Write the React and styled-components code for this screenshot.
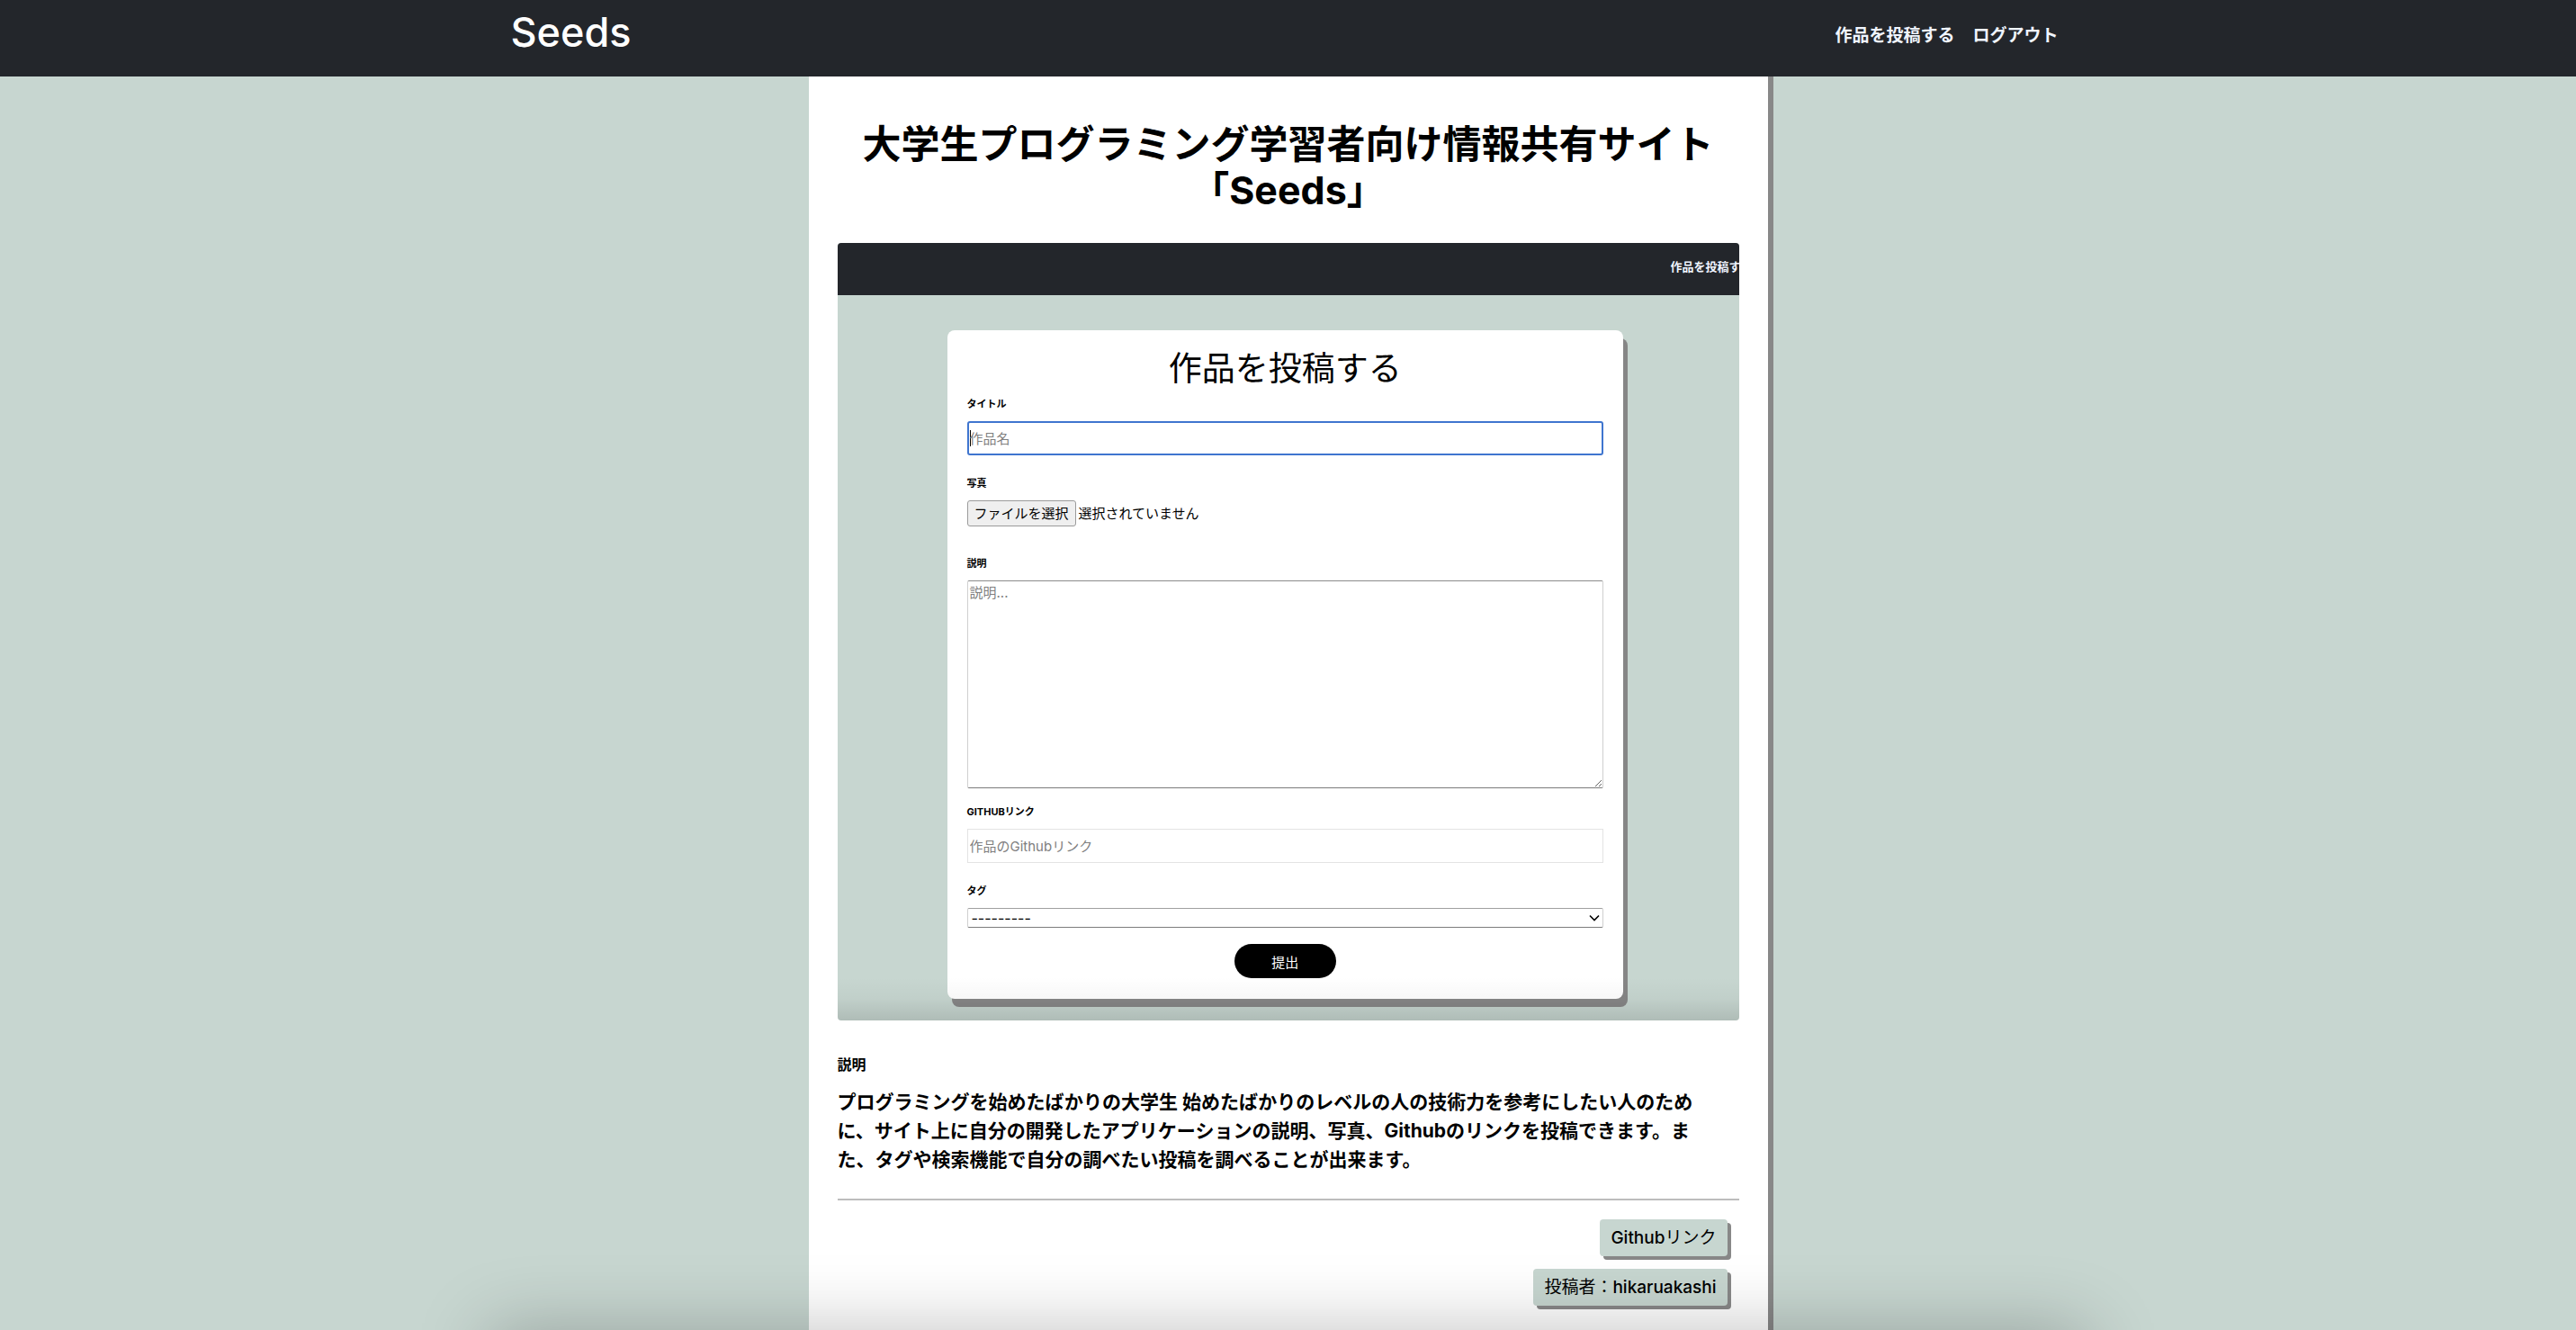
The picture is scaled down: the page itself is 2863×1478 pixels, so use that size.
import React from "react";
import styled, { createGlobalStyle } from "styled-components";

const sage = "#c7d6d0";
const ink = "#23262b";

const GlobalStyle = createGlobalStyle`
  *, *::before, *::after { box-sizing: border-box; }
  body {
    margin: 0;
    background: ${sage};
    color: #000;
    font-family: Inter, "Noto Sans CJK JP", sans-serif;
  }
  h1, h2, h3, p { margin: 0; }
  a { color: inherit; text-decoration: none; }
  input, textarea, select, button { font-family: inherit; }
`;

const Page = styled.div`
  min-height: 100vh;
  display: flex;
  flex-direction: column;
  align-items: center;
`;

const Header = styled.header`
  width: 100%;
  height: 85px;
  padding: 8px 24px 0;
  background: ${ink};
  display: flex;
  justify-content: center;
`;

const HeaderInner = styled.div`
  width: 100%;
  max-width: 1728px;
  padding-right: 8px;
  display: flex;
  justify-content: space-between;
  align-items: flex-start;
`;

const Logo = styled.a`
  color: #fff;
  font-size: 45px;
  line-height: 56px;
  font-weight: 500;
`;

const Nav = styled.nav`
  padding-top: 20px;
  display: flex;
  gap: 20px;
`;

const NavLink = styled.a`
  color: #f0f5ff;
  font-size: ${(p) => (p.$small ? 13 : 19)}px;
  line-height: 24px;
  font-weight: 700;
  white-space: nowrap;
`;

const Article = styled.main`
  flex: 1;
  width: 100%;
  max-width: 1066px;
  padding: 50px 32px 27px;
  background: #fff;
  box-shadow: 6px 0 0 #888;
  display: flex;
  flex-direction: column;
`;

const Title = styled.h1`
  font-size: 43px;
  line-height: 51px;
  font-weight: 700;
  text-align: center;
`;

const Preview = styled.section`
  position: relative;
  margin-top: 33px;
  padding-bottom: 24px;
  border-radius: 4px;
  background: ${sage};
  overflow: hidden;
`;

const PreviewShade = styled.div`
  position: absolute;
  inset: auto 0 0;
  height: 48px;
  background: linear-gradient(rgba(0, 0, 0, 0), rgba(0, 0, 0, 0.03) 50%, rgba(0, 0, 0, 0.12));
  pointer-events: none;
`;

const PreviewBar = styled.div`
  height: 58px;
  padding-top: 14px;
  background: ${ink};
  display: grid;
  grid-template-columns: 926px max-content;
  justify-content: start;
`;

const FormCard = styled.form`
  width: 75%;
  margin: 39px 0 0 122px;
  padding: 19px 22px 23px;
  border-radius: 8px;
  background: #fff;
  box-shadow: 5px 9px 0 #868686;
  display: flex;
  flex-direction: column;
`;

const FormTitle = styled.h2`
  margin-bottom: 6px;
  font-size: 37px;
  line-height: 48px;
  font-weight: 400;
  text-align: center;
`;

const Field = styled.div`
  display: flex;
  flex-direction: column;
  gap: 10px;
  margin-bottom: ${(p) => p.$space}px;
`;

const Label = styled.label`
  font-size: 11px;
  line-height: 18px;
  font-weight: 700;
  text-transform: uppercase;
`;

const TextInput = styled.input`
  width: 100%;
  height: 38px;
  border: ${(p) => (p.$active ? "2px solid #3f75cf" : "1px solid #e3e3e3")};
  border-radius: ${(p) => (p.$active ? 3 : 0)}px;
  padding: 0 ${(p) => (p.$active ? 1 : 2)}px;
  outline: none;
  font-size: 15px;
  background: ${(p) => (p.$active ? "linear-gradient(#000, #000) 1px center / 1px 18px no-repeat #fff" : "#fff")};
  &::placeholder { color: #808080; opacity: 1; }
`;

const FileRow = styled.div`
  position: relative;
  display: flex;
  align-items: center;
  gap: 3px;
  font-size: 15px;
  line-height: 27px;
`;

const HiddenFile = styled.input`
  position: absolute;
  width: 1px;
  height: 1px;
  opacity: 0;
`;

const FileButton = styled.label`
  padding: 0 7px;
  border: 1px solid #9b9b9b;
  border-radius: 3px;
  background: #efefef;
`;

const TextArea = styled.textarea`
  display: block;
  width: 100%;
  height: 231px;
  padding: 2px;
  border: 1px solid #d0d0d0;
  border-top-color: #8c8c8c;
  border-bottom-color: #7c7c7c;
  border-radius: 2px;
  outline: none;
  font-size: 15px;
  line-height: 22px;
  resize: vertical;
  &::placeholder { color: #808080; opacity: 1; }
`;

const SelectBox = styled.div`
  display: grid;
  align-items: center;
  & > * { grid-area: 1 / 1; }
`;

const Select = styled.select`
  appearance: none;
  width: 100%;
  height: 22px;
  padding: 0 4px;
  border: 1px solid #d0d0d0;
  border-top-color: #a0a0a0;
  border-bottom-color: #7c7c7c;
  border-radius: 2px;
  background: #fff;
  color: #000;
  font-size: 16px;
`;

const Chevron = styled.svg`
  justify-self: end;
  width: 12px;
  height: 8px;
  margin-right: 4px;
  pointer-events: none;
`;

const Submit = styled.button`
  align-self: center;
  width: 113px;
  height: 38px;
  padding: 0;
  border: 0;
  border-radius: 19px;
  background: #000;
  color: #fff;
  font-size: 15px;
`;

const SectionLabel = styled.h3`
  margin-top: 37px;
  font-size: 16px;
  line-height: 24px;
  font-weight: 700;
`;

const Description = styled.p`
  margin-top: 14px;
  font-size: 21px;
  line-height: 32px;
  font-weight: 700;
`;

const Divider = styled.hr`
  width: 100%;
  height: 2px;
  margin: 27px 0 21px;
  border: 0;
  background: #bdbdbd;
`;

const TagList = styled.div`
  padding-right: 13px;
  display: flex;
  flex-direction: column;
  align-items: flex-end;
  gap: 14px;
`;

const Tag = styled.a`
  padding: 0 12px;
  border-radius: 4px;
  background: ${sage};
  box-shadow: 4px 4px 0 #888;
  font-size: 19px;
  line-height: 41px;
`;

const Latin = styled.span`
  font-weight: 500;
`;

const BottomShade = styled.div`
  position: fixed;
  top: 100%;
  left: 19%;
  right: 19%;
  height: 80px;
  box-shadow: 0 0 80px rgba(0, 0, 0, 0.25);
  pointer-events: none;
`;

export default function App() {
  return (
    <Page>
      <GlobalStyle />
      <Header>
        <HeaderInner>
          <Logo href="#">Seeds</Logo>
          <Nav>
            <NavLink href="#post">作品を投稿する</NavLink>
            <NavLink href="#logout">ログアウト</NavLink>
          </Nav>
        </HeaderInner>
      </Header>

      <Article>
        <Title>
          大学生プログラミング学習者向け情報共有サイト
          <br />
          「Seeds」
        </Title>

        <Preview>
          <PreviewBar>
            <span />
            <NavLink $small href="#post">作品を投稿する</NavLink>
          </PreviewBar>
          <FormCard id="post">
            <FormTitle>作品を投稿する</FormTitle>
            <Field $space={22}>
              <Label htmlFor="title">タイトル</Label>
              <TextInput $active id="title" placeholder="作品名" />
            </Field>
            <Field $space={32}>
              <Label htmlFor="photo">写真</Label>
              <FileRow>
                <HiddenFile id="photo" type="file" />
                <FileButton htmlFor="photo">ファイルを選択</FileButton>
                <span>選択されていません</span>
              </FileRow>
            </Field>
            <Field $space={17}>
              <Label htmlFor="about">説明</Label>
              <TextArea id="about" placeholder="説明..." />
            </Field>
            <Field $space={22}>
              <Label htmlFor="github">Githubリンク</Label>
              <TextInput id="github" placeholder="作品のGithubリンク" />
            </Field>
            <Field $space={18}>
              <Label htmlFor="tag">タグ</Label>
              <SelectBox>
                <Select id="tag">
                  <option>---------</option>
                </Select>
                <Chevron viewBox="0 0 12 8" fill="none" stroke="#000" strokeWidth="1.6">
                  <path d="M1 1.5 6 6.5 11 1.5" />
                </Chevron>
              </SelectBox>
            </Field>
            <Submit type="button">提出</Submit>
          </FormCard>
          <PreviewShade />
        </Preview>

        <SectionLabel>説明</SectionLabel>
        <Description>
          プログラミングを始めたばかりの大学生 始めたばかりのレベルの人の技術力を参考にしたい人のため
          <br />
          に、サイト上に自分の開発したアプリケーションの説明、写真、Githubのリンクを投稿できます。ま
          <br />
          た、タグや検索機能で自分の調べたい投稿を調べることが出来ます。
        </Description>
        <Divider />
        <TagList>
          <Tag href="#github"><Latin>Github</Latin>リンク</Tag>
          <Tag href="#author">投稿者：<Latin>hikaruakashi</Latin></Tag>
        </TagList>
      </Article>
      <BottomShade />
    </Page>
  );
}
